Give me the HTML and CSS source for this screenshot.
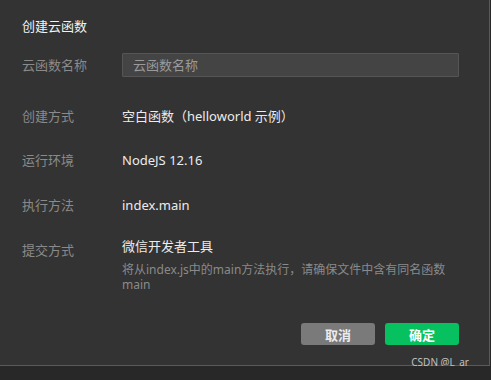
FILE: index.html
```html
<!DOCTYPE html>
<html lang="zh-CN">
<head>
    <meta charset="UTF-8">
    <meta name="viewport" content="width=device-width, initial-scale=1.0">
    <title>创建云函数</title>
    <link rel="stylesheet" href="styles.css">
</head>
<body>
    <div class="dialog">
        <h1 class="title">创建云函数</h1>

        <div class="row row-input">
            <label class="label" for="fnName">云函数名称</label>
            <input class="text-input" id="fnName" type="text" placeholder="云函数名称">
        </div>

        <div class="row row-2">
            <span class="label">创建方式</span>
            <span class="value">空白函数（helloworld 示例）</span>
        </div>

        <div class="row row-3">
            <span class="label">运行环境</span>
            <span class="value">NodeJS 12.16</span>
        </div>

        <div class="row row-4">
            <span class="label">执行方法</span>
            <span class="value">index.main</span>
        </div>

        <div class="row row-5">
            <span class="label label-low">提交方式</span>
            <div class="value-block">
                <div class="value">微信开发者工具</div>
                <p class="desc">将从index.js中的main方法执行，请确保文件中含有同名函数main</p>
            </div>
        </div>

        <div class="footer">
            <button class="btn btn-cancel">取消</button>
            <button class="btn btn-ok">确定</button>
        </div>

        <span class="watermark">CSDN @L_ar</span>
    </div>
</body>
</html>
```

FILE: styles.css
```css
body {
    margin: 0;
    background-color: #282828;
    font-family: "Noto Sans", "Noto Sans CJK SC", sans-serif;
    font-size: 13px;
}
.dialog {
    position: relative;
    width: 490px;
    height: 366px;
    box-sizing: border-box;
    background-color: #333333;
    border-right: 1px solid #5a5a5a;
    border-bottom: 1px solid #5a5a5a;
    padding: 16px 30px 0 22px;
}
.title {
    margin: 0;
    font-size: 13px;
    font-weight: normal;
    line-height: 20px;
    color: #f2f2f2;
}
.row {
    display: flex;
    align-items: flex-start;
    line-height: 20px;
}
.row-input {
    margin-top: 17px;
    align-items: center;
}
.row-2 {
    margin-top: 29px;
}
.row-3 {
    margin-top: 24px;
}
.row-4 {
    margin-top: 25px;
}
.row-5 {
    margin-top: 21px;
}
.label {
    width: 100px;
    flex-shrink: 0;
    color: #8a8a8a;
}
.label-low {
    padding-top: 4px;
}
.value {
    color: #ececec;
}
.value-block {
    flex: 1;
}
.desc {
    margin: 6px 0 0;
    font-size: 12px;
    line-height: 15px;
    color: #8a8a8a;
    max-width: 325px;
}
.text-input {
    width: 337px;
    height: 24px;
    box-sizing: border-box;
    padding: 0 10px;
    background-color: #444444;
    border: 1px solid #555555;
    border-radius: 1px;
    color: #e0e0e0;
    font-family: inherit;
    font-size: 13px;
    outline: none;
}
.text-input::placeholder {
    color: #9a9a9a;
}
.footer {
    display: flex;
    justify-content: flex-end;
    gap: 10px;
    margin-top: 31px;
}
.btn {
    width: 74px;
    height: 22px;
    border: none;
    border-radius: 3px;
    font-family: inherit;
    font-size: 13px;
    font-weight: bold;
    cursor: pointer;
}
.btn-cancel {
    background-color: #7a7a7a;
    color: #ececec;
}
.btn-ok {
    background-color: #07c160;
    color: #ffffff;
}
.watermark {
    position: absolute;
    right: 20px;
    bottom: -3px;
    z-index: 1;
    font-size: 10px;
    line-height: 12px;
    color: #c0c0c0;
}
```
